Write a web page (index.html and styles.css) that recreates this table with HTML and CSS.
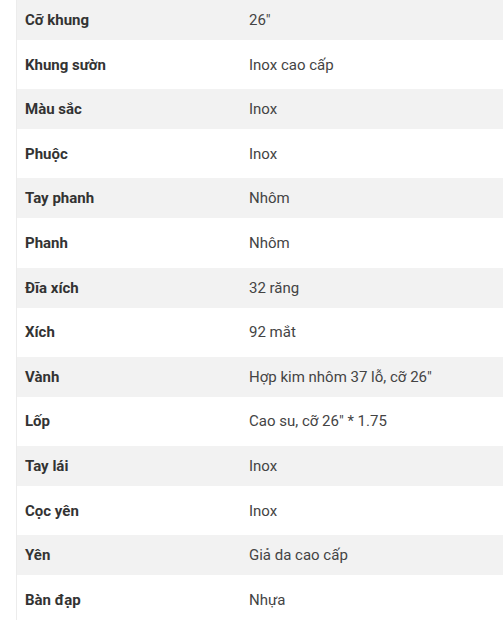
FILE: index.html
```html
<!DOCTYPE html>
<html lang="vi">
<head>
<meta charset="utf-8">
<link rel="stylesheet" href="styles.css">
</head>
<body>
<div class="page">
  <div class="specs">
    <div class="row odd"><div class="k">Cỡ khung</div><div class="v">26"</div></div>
    <div class="row even"><div class="k">Khung sườn</div><div class="v">Inox cao cấp</div></div>
    <div class="row odd"><div class="k">Màu sắc</div><div class="v">Inox</div></div>
    <div class="row even"><div class="k">Phuộc</div><div class="v">Inox</div></div>
    <div class="row odd"><div class="k">Tay phanh</div><div class="v">Nhôm</div></div>
    <div class="row even"><div class="k">Phanh</div><div class="v">Nhôm</div></div>
    <div class="row odd"><div class="k">Đĩa xích</div><div class="v">32 răng</div></div>
    <div class="row even"><div class="k">Xích</div><div class="v">92 mắt</div></div>
    <div class="row odd"><div class="k">Vành</div><div class="v">Hợp kim nhôm 37 lỗ, cỡ 26"</div></div>
    <div class="row even"><div class="k">Lốp</div><div class="v">Cao su, cỡ 26" * 1.75</div></div>
    <div class="row odd"><div class="k">Tay lái</div><div class="v">Inox</div></div>
    <div class="row even"><div class="k">Cọc yên</div><div class="v">Inox</div></div>
    <div class="row odd"><div class="k">Yên</div><div class="v">Giả da cao cấp</div></div>
    <div class="row even"><div class="k">Bàn đạp</div><div class="v">Nhựa</div></div>
  </div>
</div>
</body>
</html>
```

FILE: styles.css
```css
html, body {
  margin: 0;
  padding: 0;
  background: #fff;
}
.page {
  padding-left: 16px;
  font-family: Roboto, "Liberation Sans", sans-serif;
  font-size: 15px;
}
.specs {
  border-left: 1px solid #ececec;
  display: flex;
  flex-direction: column;
}
.row {
  display: grid;
  grid-template-columns: 224px 1fr;
  align-items: center;
}
.row.odd {
  background: #f2f2f2;
  height: 40px;
}
.row.even {
  background: #fff;
  height: 49.2px;
}
.k {
  padding-left: 8px;
  font-weight: 700;
  color: #333;
}
.v {
  padding-left: 8px;
  color: #444;
}
```
